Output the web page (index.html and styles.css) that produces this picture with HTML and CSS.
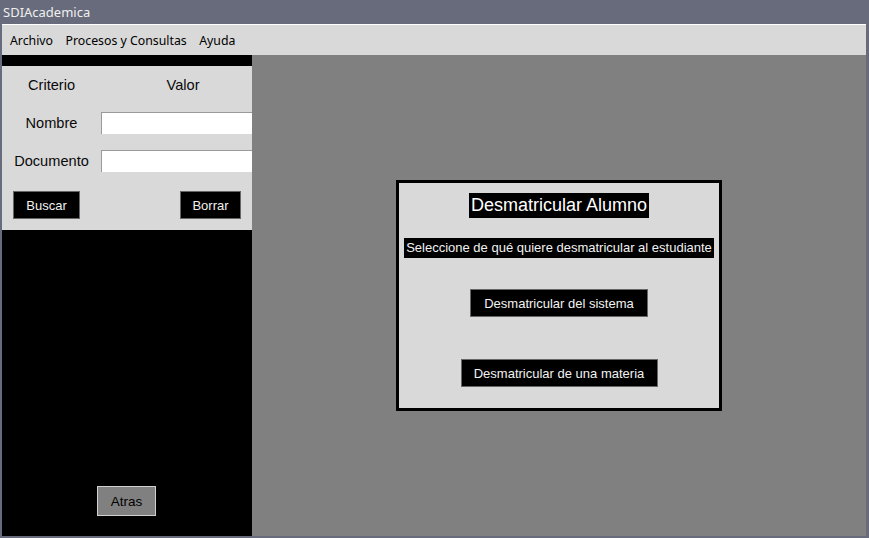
FILE: index.html
```html
<!DOCTYPE html>
<html lang="es">
<head>
<meta charset="utf-8">
<title>SDIAcademica</title>
<link rel="stylesheet" href="styles.css">
</head>
<body>
<div class="titlebar">SDIAcademica</div>
<div class="window">
  <div class="menubar">
    <span class="menu-item">Archivo</span>
    <span class="menu-item">Procesos y Consultas</span>
    <span class="menu-item">Ayuda</span>
  </div>
  <div class="main">
    <aside class="left">
      <div class="form">
        <div class="form-grid">
          <div class="cell head">Criterio</div>
          <div class="cell head">Valor</div>
          <div class="cell label">Nombre</div>
          <div class="cell value"><input class="field" type="text"></div>
          <div class="cell label">Documento</div>
          <div class="cell value"><input class="field" type="text"></div>
        </div>
        <div class="form-actions">
          <button class="btn-dark btn-buscar">Buscar</button>
          <button class="btn-dark btn-borrar">Borrar</button>
        </div>
      </div>
      <button class="btn-back">Atras</button>
    </aside>
    <section class="content">
      <div class="dialog">
        <div class="dialog-title">Desmatricular Alumno</div>
        <div class="dialog-sub">Seleccione de qué quiere desmatricular al estudiante</div>
        <button class="btn-dark btn-opt1">Desmatricular del sistema</button>
        <button class="btn-dark btn-opt2">Desmatricular de una materia</button>
      </div>
    </section>
  </div>
</div>
</body>
</html>
```
FILE: styles.css
```css
* { box-sizing: border-box; }
html, body { margin: 0; padding: 0; }
body {
  width: 869px;
  height: 538px;
  overflow: hidden;
  background: #676b7b;
  font-family: "Liberation Sans", Arial, sans-serif;
}
.titlebar {
  height: 24px;
  line-height: 24px;
  padding-left: 3px;
  font-family: "Noto Sans", sans-serif;
  font-size: 13px;
  color: #f0f0f0;
}
.window {
  margin: 0 3px 0 2px;
  height: 512px;
  display: flex;
  flex-direction: column;
}
.menubar {
  height: 31px;
  background: #d9d9d9;
  border-top: 1px solid #ffffff;
  display: flex;
  align-items: center;
  padding-left: 8px;
  font-family: "Noto Sans", sans-serif;
  font-size: 12.3px;
  color: #000;
}
.menu-item { margin-right: 12.5px; }
.main {
  flex: 1;
  display: flex;
  min-height: 0;
}
.left {
  width: 250px;
  background: #000;
  display: flex;
  flex-direction: column;
  align-items: center;
  padding-top: 11px;
}
.form {
  width: 250px;
  height: 164px;
  background: #d9d9d9;
  overflow: hidden;
}
.form-grid {
  display: grid;
  grid-template-columns: 99px 164px;
  grid-auto-rows: 38px;
}
.cell {
  display: flex;
  align-items: center;
  justify-content: center;
  font-size: 14.6px;
  color: #0a0a0a;
}
.cell.value { justify-content: flex-start; }
.field {
  width: 164px;
  height: 22px;
  margin: 0;
  border: 0;
  border-top: 1px solid #9a9a9a;
  border-left: 1px solid #9a9a9a;
  background: #fff;
  outline: none;
}
.form-actions {
  display: flex;
  justify-content: space-between;
  padding: 0 11px;
  margin-top: 11px;
}
.btn-dark {
  background: #000;
  color: #f2f2f2;
  border: 1px solid #666;
  font-family: "Liberation Sans", Arial, sans-serif;
  font-size: 13px;
  height: 28px;
  padding: 0;
  margin: 0;
}
.btn-buscar { width: 67px; }
.btn-borrar { width: 61px; }
.btn-back {
  margin-top: auto;
  margin-bottom: 20px;
  margin-right: 1px;
  width: 59px;
  height: 30px;
  background: #808080;
  border: 1px solid #d0d0d0;
  color: #000;
  font-family: "Liberation Sans", Arial, sans-serif;
  font-size: 13.5px;
  padding: 0;
}
.content {
  flex: 1;
  background: #808080;
  display: flex;
  align-items: center;
  justify-content: center;
}
.dialog {
  width: 326px;
  height: 231px;
  border: 3px solid #000;
  background: #d9d9d9;
  display: flex;
  flex-direction: column;
  align-items: center;
  padding-top: 10px;
}
.dialog-title {
  background: #000;
  color: #fff;
  font-size: 18px;
  height: 25px;
  line-height: 25px;
  padding: 0 2px;
}
.dialog-sub {
  margin-top: 20px;
  background: #000;
  color: #f2f2f2;
  font-size: 13px;
  height: 20px;
  line-height: 20px;
  padding: 0 2px;
}
.btn-opt1 { margin-top: 31px; width: 178px; }
.btn-opt2 { margin-top: 42px; width: 197px; }
```
